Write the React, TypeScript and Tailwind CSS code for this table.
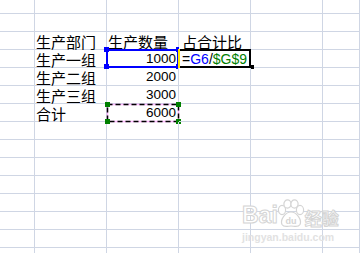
import React from 'react';

const line = 'border-r border-b border-[#cfd6e4]';
const cjk = "font-['Noto_Sans_CJK_SC',sans-serif]";
const sans = "font-['Liberation_Sans',sans-serif]";

type Row = { label?: string; qty?: string; third?: string };

const rows: Row[] = [
  {},
  { label: '生产部门', qty: '生产数量', third: '占合计比' },
  { label: '生产一组', qty: '1000' },
  { label: '生产二组', qty: '2000' },
  { label: '生产三组', qty: '3000' },
  { label: '合计', qty: '6000' },
  {}, {}, {}, {}, {}, {}, {}, {},
];

// blue reference box with handles (the G6 in the formula)
const RefBox = () => (
  <svg className="absolute left-[-4px] top-[-4px]" width="80" height="26" viewBox="0 0 80 26">
    <rect x="4" y="4" width="71" height="17" fill="none" stroke="#0000ff" strokeWidth="2" />
    <rect x="1" y="1" width="5" height="5" fill="#0000ff" />
    <rect x="1" y="18" width="5" height="5" fill="#0000ff" />
    <rect x="73" y="1" width="3" height="5" fill="#0000ff" />
    <rect x="73" y="18" width="3" height="5" fill="#0000ff" />
  </svg>
);

// marching ants around the total cell
const CopyBox = () => (
  <svg className="absolute left-[-4px] top-[-4px]" width="80" height="26" viewBox="0 0 80 26">
    <rect x="4.5" y="4.5" width="71" height="17" fill="none" stroke="#ffb8ff" strokeWidth="1.5" />
    <rect x="4.5" y="4.5" width="71" height="17" fill="none" stroke="#000" strokeWidth="1.5" strokeDasharray="5 3" />
    <rect x="2" y="2" width="5" height="5" fill="#008000" />
    <rect x="73" y="2" width="5" height="5" fill="#008000" />
    <rect x="2" y="19" width="5" height="5" fill="#008000" />
    <rect x="73" y="19" width="5" height="5" fill="#008000" />
  </svg>
);

// editing cell frame: black border, yellow left edge, fill handle
const EditBox = () => (
  <svg className="absolute left-[-1px] top-[-1px]" width="76" height="22" viewBox="0 0 76 22">
    <rect x="1" y="1" width="71" height="17" fill="none" stroke="#000" strokeWidth="2" />
    <rect x="0" y="0" width="2" height="19" fill="#ffe400" />
    <rect x="72" y="16" width="4" height="4" fill="#000" />
  </svg>
);

const Paw = () => (
  <svg width="28" height="30" viewBox="0 0 28 30" className="-mx-[1px]">
    <g fill="#fff" stroke="#d4d4d4" strokeWidth="1.2">
      <ellipse cx="5" cy="11" rx="3.6" ry="4.6" />
      <ellipse cx="10.5" cy="5" rx="3.6" ry="4.2" />
      <ellipse cx="17.5" cy="5" rx="3.6" ry="4.2" />
      <ellipse cx="23" cy="11" rx="3.6" ry="4.6" />
      <path d="M14 13 C 8 13, 3 21, 5 25.5 C 7 29, 11 27, 14 27 C 17 27, 21 29, 23 25.5 C 25 21, 20 13, 14 13 Z" />
    </g>
    <text x="14" y="25" textAnchor="middle" fontFamily="Liberation Sans" fontWeight="700" fontSize="9" fill="#d4d4d4">du</text>
  </svg>
);

export default function App() {
  return (
    <div className="relative w-[360px] h-[253px] overflow-hidden bg-white text-black">
      <div className="grid grid-cols-[35px_72px_72px_72px_72px_1fr]">
        {['a', 'b', 'c', 'd', 'e', 'f'].map((k) => (
          <div key={k} className={`${line} h-[14px]`} />
        ))}
        {rows.map((r, ri) => (
          <React.Fragment key={ri}>
            <div className={`${line} h-[18px]`} />
            <div className={`${line} h-[18px] flex items-center pl-[1px] pt-[1px] text-[15px] leading-none ${cjk}`}>
              {r.label}
            </div>
            <div
              className={`${line} relative h-[18px] flex items-center leading-none ${
                ri === 1 ? `${cjk} text-[15px] pl-[1px] pt-[1px]` : `${sans} text-[13.5px] justify-end pr-[2px] pt-[1px]`
              }`}
            >
              {r.qty}
              {ri === 2 && <RefBox />}
              {ri === 5 && <CopyBox />}
            </div>
            <div className={`${line} relative h-[18px] flex items-center leading-none pl-[3px] pt-[1px]`}>
              {ri === 1 && <span className={`${cjk} text-[15px]`}>{r.third}</span>}
              {ri === 2 && (
                <>
                  <EditBox />
                  <span className={`${sans} text-[14px]`}>
                    =<span className="text-[#0000ff]">G6</span>/<span className="text-[#008000]">$G$9</span>
                  </span>
                  <span className="ml-[2px] w-[2px] h-[15px] bg-black" />
                </>
              )}
            </div>
            <div className={`${line} h-[18px]`} />
            <div className={`${line} h-[18px]`} />
          </React.Fragment>
        ))}
      </div>

      {/* watermark */}
      <div className="absolute left-[242px] top-[199px] flex flex-col items-start gap-[3px] pointer-events-none">
        <div className="flex items-end">
          <span className={`${sans} font-bold text-[23px] leading-none text-white [-webkit-text-stroke:1px_#d4d4d4] mb-[2px]`}>
            Bai
          </span>
          <Paw />
          <span className={`${cjk} font-bold text-[17px] leading-none text-white [-webkit-text-stroke:1px_#d4d4d4] mb-[3px] ml-[1px]`}>
            经验
          </span>
        </div>
        <div className={`${sans} font-bold text-[10.5px] leading-none text-[#e2e2e2]`}>jingyan.baidu.com</div>
      </div>
    </div>
  );
}
